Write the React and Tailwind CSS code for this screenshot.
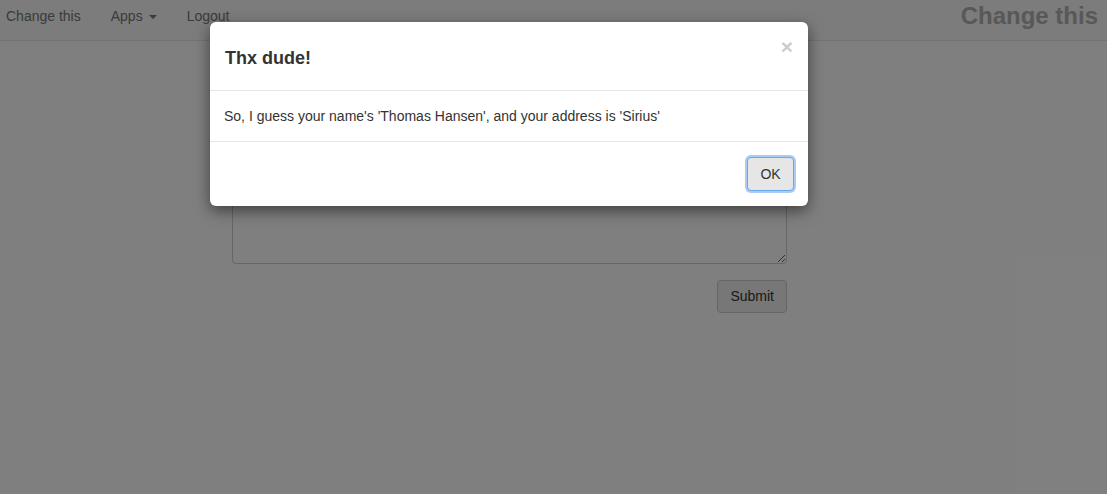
import { useState } from 'react';

export default function App() {
    const [open, setOpen] = useState(true);

    return (
        <div className="relative min-h-[494px] bg-white font-['Liberation_Sans',Arial,sans-serif] text-[14px] text-[#333]">
            <nav className="flex h-[41px] items-center justify-between border-b border-[#e7e7e7] bg-[#f8f8f8] pb-[8px]">
                <ul className="flex items-center text-[#777]">
                    <li className="pl-[6px] pr-[30px]">Change this</li>
                    <li className="flex items-center gap-[6px] pr-[30px]">
                        Apps
                        <span className="mt-[2px] h-0 w-0 border-x-4 border-t-4 border-x-transparent border-t-[#777]" />
                    </li>
                    <li>Logout</li>
                </ul>
                <span className="pr-[9px] text-[24px] font-bold text-[#b0b0b0]">Change this</span>
            </nav>

            <main className="ml-[232px] mt-[110px] flex w-[555px] flex-col gap-4">
                <textarea className="h-[113px] w-full rounded-[4px] border border-[#ccc] bg-white" />
                <div className="flex justify-end">
                    <button className="h-[33px] rounded-[4px] border border-[#ccc] bg-[#eeeeee] px-3 text-[#333]">Submit</button>
                </div>
            </main>

            {open && (
                <div className="absolute inset-0 bg-black/50">
                    <div className="ml-[210px] mt-[22px] w-[598px] rounded-[6px] bg-white shadow-[0_5px_15px_rgba(0,0,0,0.5)]">
                        <div className="flex h-[69px] items-start justify-between border-b border-[#e5e5e5] px-[15px]">
                            <h4 className="mt-[23px] text-[18px] font-bold text-[#333]">Thx dude!</h4>
                            <button className="mt-[14px] text-[21px] font-bold leading-none text-black opacity-20" onClick={() => setOpen(false)}>
                                ×
                            </button>
                        </div>
                        <div className="flex h-[51px] items-center border-b border-[#e5e5e5] px-[14px]">
                            So, I guess your name's 'Thomas Hansen', and your address is 'Sirius'
                        </div>
                        <div className="flex h-[64px] items-center justify-end px-[14px]">
                            <button
                                className="h-[34px] w-[47px] rounded-[4px] border border-[#6aa7e8] bg-[#e6e6e6] text-[#333] shadow-[0_0_0_2px_rgba(102,163,232,0.55)]"
                                onClick={() => setOpen(false)}
                            >
                                OK
                            </button>
                        </div>
                    </div>
                </div>
            )}
        </div>
    );
}
